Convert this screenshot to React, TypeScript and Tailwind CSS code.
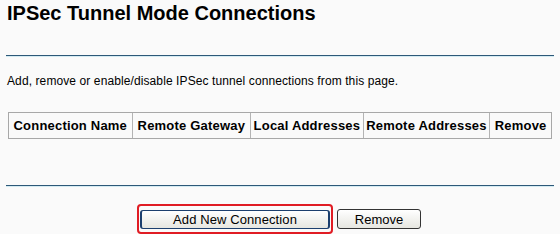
export default function App() {
  const cols = [
    { name: "Connection Name", w: "w-[123px]" },
    { name: "Remote Gateway", w: "w-[119px]" },
    { name: "Local Addresses", w: "w-[113px]" },
    { name: "Remote Addresses", w: "w-[127px]" },
    { name: "Remove", w: "w-[62px]" },
  ];

  return (
    <div className="w-[560px] h-[234px] overflow-hidden bg-[#fafafa] font-['Liberation_Sans',Arial,sans-serif] text-black">
      {/* Title */}
      <h1 className="pl-[7px] pt-[2px] text-[20px] leading-[23px] font-bold">
        IPSec Tunnel Mode Connections
      </h1>

      {/* Top rule */}
      <div className="mx-[6px] mt-[30px] border-t border-[#2d5878] border-b border-b-[#d4ebf2]" />

      {/* Description */}
      <p className="pl-[7px] mt-[17px] text-[12px] leading-[14px] tracking-[0.1px]">
        Add, remove or enable/disable IPSec tunnel connections from this page.
      </p>

      {/* Table */}
      <div className="ml-[8px] mt-[24px] w-[544px] flex border border-[#a8a8a8]">
        {cols.map((c, i) => (
          <div
            key={c.name}
            className={`${c.w} h-[25px] flex items-center justify-center text-[13px] font-bold tracking-[0.2px] ${
              i > 0 ? "border-l border-[#b4b4b4]" : ""
            }`}
          >
            {c.name}
          </div>
        ))}
      </div>

      {/* Bottom rule */}
      <div className="mx-[6px] mt-[46px] border-t border-[#2d5878] border-b border-b-[#d4ebf2]" />

      {/* Buttons */}
      <div className="mt-[17px] flex items-center pl-[137px] gap-[4px]">
        <div className="rounded-[4px] border-2 border-[#e01c24] p-px">
          <button className="w-[190px] h-[19px] rounded-[3px] border border-[#1c3f6e] border-l-[2px] border-r-[2px] bg-gradient-to-b from-white to-[#e6e6e0] text-[13px] leading-[15px] tracking-[0.1px] text-black">
            Add New Connection
          </button>
        </div>
        <button className="w-[84px] h-[20px] rounded-[3px] border border-[#333333] bg-gradient-to-b from-white to-[#e6e6e0] text-[13px] leading-[15px] text-black">
          Remove
        </button>
      </div>
    </div>
  );
}
